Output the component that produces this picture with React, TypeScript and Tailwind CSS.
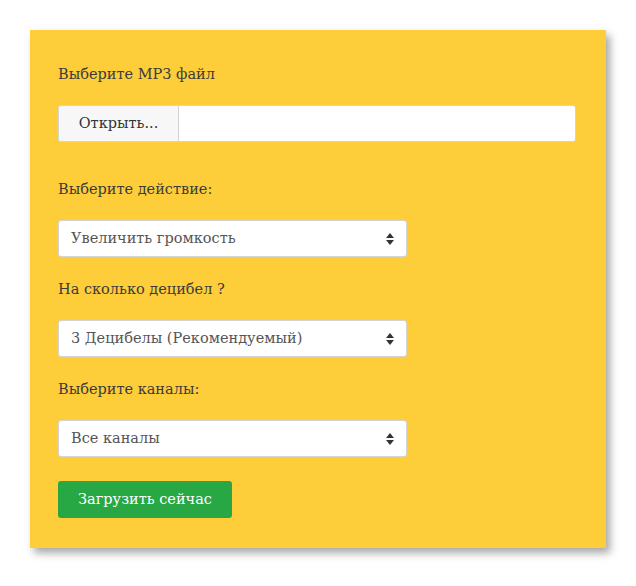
import type { ReactNode } from "react"

const serif = { fontFamily: '"DejaVu Serif", "Liberation Serif", serif' }

function Arrows() {
    return (
        <svg width="8" height="12" viewBox="0 0 8 12" className="shrink-0">
            <path d="M4 0 L8 5 L0 5 Z" fill="#333" />
            <path d="M0 7 L8 7 L4 12 Z" fill="#333" />
        </svg>
    )
}

function Field({ label, children }: { label: string; children: ReactNode }) {
    return (
        <div className="flex flex-col gap-[21px]">
            <div className="text-[14.5px] text-[#3b3b3b] leading-[20px]">{label}</div>
            {children}
        </div>
    )
}

function Select({ children }: { children: ReactNode }) {
    return (
        <div className="w-[349px] h-[37px] bg-white border border-[#d4d4d4] rounded-[3px] flex items-center justify-between px-[12px] text-[14.5px] text-[#555]">
            <span>{children}</span>
            <Arrows />
        </div>
    )
}

export default function App() {
    return (
        <div className="w-[636px] h-[586px] bg-white pl-[30px] pt-[30px]" style={serif}>
            <div className="w-[576px] h-[518px] bg-[#fecd3a] shadow-[4px_5px_8px_rgba(0,0,0,0.35)] px-[28px] pt-[34px] flex flex-col">
                <Field label="Выберите MP3 файл">
                    <div className="w-[518px] h-[37px] bg-white border border-[#d4d4d4] rounded-[3px] flex overflow-hidden">
                        <div className="w-[120px] h-full bg-[#f7f7f7] border-r border-[#d4d4d4] flex items-center justify-center text-[14.5px] text-[#333]">
                            Открыть...
                        </div>
                    </div>
                </Field>
                <div className="mt-[37px] flex flex-col gap-[22px]">
                    <Field label="Выберите действие:">
                        <Select>Увеличить громкость</Select>
                    </Field>
                    <Field label="На сколько децибел ?">
                        <Select>3 Децибелы (Рекомендуемый)</Select>
                    </Field>
                    <Field label="Выберите каналы:">
                        <Select>Все каналы</Select>
                    </Field>
                </div>
                <button className="mt-[24px] w-[174px] h-[37px] bg-[#28a745] rounded-[3px] text-white text-[14.5px]">
                    Загрузить сейчас
                </button>
            </div>
        </div>
    )
}
